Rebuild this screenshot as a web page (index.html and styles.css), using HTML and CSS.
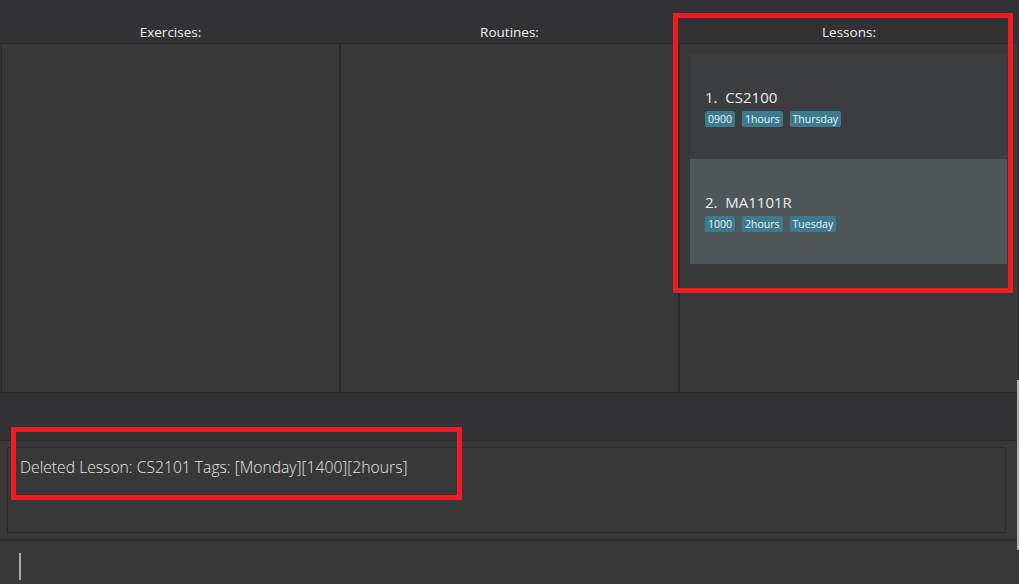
FILE: index.html
```html
<!DOCTYPE html>
<html>
<head>
<meta charset="utf-8">
<link rel="stylesheet" href="styles.css">
</head>
<body>
<div class="app">
  <div class="columns">
    <section class="col first">
      <div class="col-title">Exercises:</div>
      <div class="panel"></div>
    </section>
    <section class="col">
      <div class="col-title">Routines:</div>
      <div class="panel"></div>
    </section>
    <section class="col">
      <div class="col-title">Lessons:</div>
      <div class="panel lessons">
        <div class="card">
          <div class="card-title">1.&nbsp; CS2100</div>
          <div class="tags"><span class="tag">0900</span><span class="tag">1hours</span><span class="tag">Thursday</span></div>
        </div>
        <div class="card alt">
          <div class="card-title">2.&nbsp; MA1101R</div>
          <div class="tags"><span class="tag">1000</span><span class="tag">2hours</span><span class="tag">Tuesday</span></div>
        </div>
      </div>
    </section>
  </div>
  <div class="strip"></div>
  <div class="result">
    <div class="result-box">Deleted Lesson: CS2101 Tags: [Monday][1400][2hours]</div>
  </div>
  <div class="command"><span class="caret"></span></div>
  <div class="mark mark-lessons"></div>
  <div class="mark mark-result"></div>
  <div class="edge"></div>
</div>
</body>
</html>
```
FILE: styles.css
```css
* { box-sizing: border-box; }
html, body { margin: 0; padding: 0; }
body {
  background: #323234;
  font-family: "Open Sans", "Noto Sans", sans-serif;
  width: 1019px;
  height: 584px;
  overflow: hidden;
}
.app {
  position: relative;
  width: 1019px;
  height: 584px;
  display: flex;
  flex-direction: column;
}
.columns {
  flex-shrink: 0;
  display: grid;
  grid-template-columns: 340px 339px 340px;
  height: 393px;
}
.col { display: flex; flex-direction: column; }
.col.first { padding-left: 1px; }
.col-title {
  height: 43px;
  flex-shrink: 0;
  display: flex;
  align-items: flex-end;
  justify-content: center;
  padding-bottom: 2px;
  color: #f0f0f0;
  font-size: 13.5px;
  font-weight: 400;
  line-height: 18px;
}
.panel {
  flex: 1;
  background: #383838;
  border: 1px solid #2a2a2b;
}
.lessons {
  padding: 10px 11px 0 10px;
}
.card {
  height: 105px;
  background: #3c3d3f;
  padding: 35px 15px 0 15px;
}
.card.alt { background: #515658; }
.card-title {
  color: #ececec;
  font-size: 15px;
  line-height: 17px;
  font-weight: 400;
}
.tags {
  display: flex;
  gap: 7px;
  margin-top: 5px;
}
.tag {
  background: #3c7a90;
  color: #eef4f6;
  font-size: 10.5px;
  line-height: 16px;
  padding: 0 3px;
  border-radius: 2px;
}
.strip {
  flex-shrink: 0;
  height: 48px;
  background: #323234;
  border-bottom: 1px solid #2a2a2b;
}
.result {
  flex-shrink: 0;
  height: 100px;
  background: #383838;
  padding: 6px 13px 6px 7px;
  border-bottom: 2px solid #2a2a2b;
}
.result-box {
  height: 86px;
  border: 1px solid #2a2a2b;
  padding: 8px 12px;
  color: #e6e6e6;
  font-size: 15.7px;
  font-weight: 300;
  line-height: 22px;
}
.command {
  flex: 1;
  min-height: 0;
  background: #383838;
  padding: 12px 19px 0;
}
.caret {
  display: block;
  width: 2px;
  height: 27px;
  background: #a8a8a8;
}
.mark {
  position: absolute;
  border: 5px solid #ed1c24;
}
.mark-lessons { left: 673px; top: 13px; width: 340px; height: 280px; }
.mark-result { left: 11px; top: 427px; width: 451px; height: 73px; }
.edge {
  position: absolute;
  right: 0;
  top: 380px;
  width: 2px;
  height: 170px;
  background: #b5b0a8;
}
```
